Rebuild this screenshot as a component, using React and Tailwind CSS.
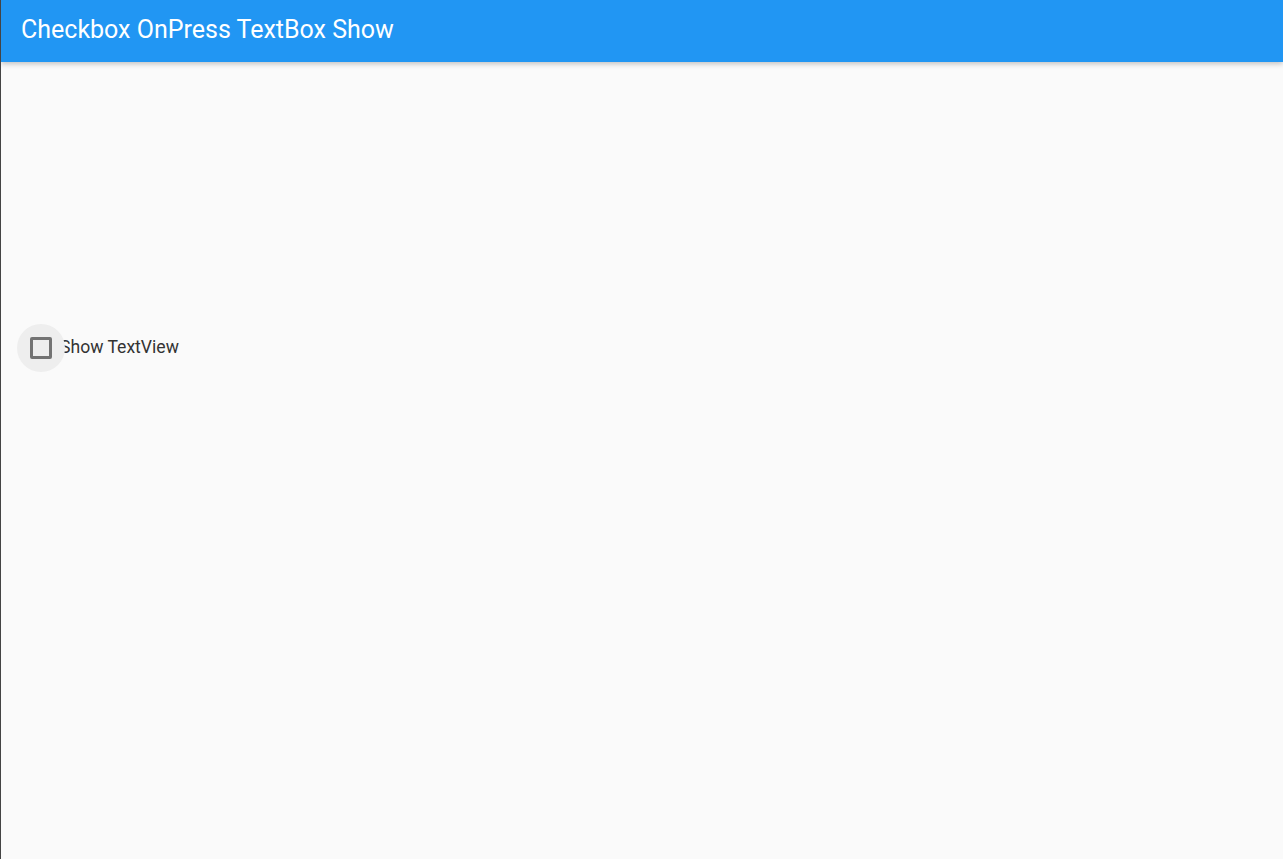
import React from "react";

export default function App() {
  return (
    <div
      className="w-[1283px] h-[859px] bg-[#fafafa] border-l border-[#444444] flex flex-col overflow-hidden"
      style={{ fontFamily: "Roboto, 'Noto Sans', sans-serif" }}
    >
      <header className="h-[62px] shrink-0 bg-[#2196f3] flex items-center pl-[20px] pb-[4px] shadow-[0_2px_5px_rgba(0,0,0,0.22)] relative z-10">
        <h1 className="text-white text-[25px] font-normal leading-none">
          Checkbox OnPress TextBox Show
        </h1>
      </header>
      <main className="flex-1 pt-[262px] pl-[16px]">
        <div className="flex items-center h-[48px]">
          <div className="relative w-[48px] h-[48px] flex items-center justify-center">
            <div className="absolute inset-0 rounded-full bg-[#eeeeee]" />
            <div className="relative w-[22px] h-[22px] border-[3px] border-[#737373] rounded-[2px]" />
          </div>
          <span className="-ml-[5px] text-[17.6px] text-[#333333] leading-none">
            Show TextView
          </span>
        </div>
      </main>
    </div>
  );
}
